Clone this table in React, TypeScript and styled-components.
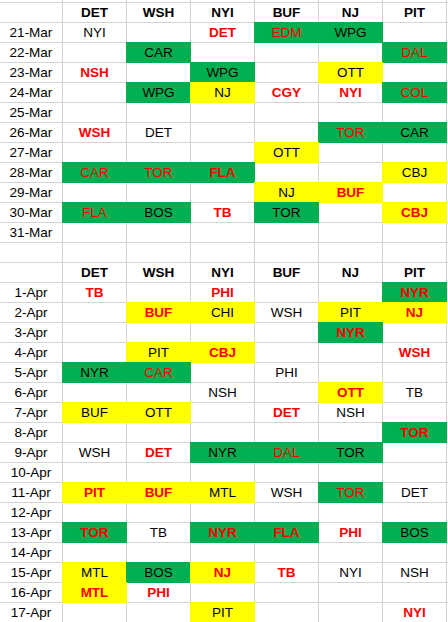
import React from "react";
import styled, { createGlobalStyle } from "styled-components";

const Global = createGlobalStyle`
  html, body { margin: 0; padding: 0; background: #ffffff; }
  body { font-family: "Liberation Sans", Arial, sans-serif; }
`;

const GRID = "#d4d4d4";
const FILLS: Record<string, string> = { g: "#00b050", y: "#ffff00" };

const Sheet = styled.div`
  display: grid;
  grid-template-columns: 62px repeat(6, 63px) 1px;
  grid-auto-rows: 19px;
  grid-template-rows: 2px;
  gap: 1px;
  width: 448px;
  height: 622px;
  overflow: hidden;
  background: ${GRID};
`;

const Cell = styled.div<{ $fill?: string; $red?: boolean; $bold?: boolean }>`
  background: ${(p) => (p.$fill ? FILLS[p.$fill] : "#ffffff")};
  box-shadow: ${(p) => (p.$fill ? `0 0 0 1px ${FILLS[p.$fill]}` : "none")};
  color: ${(p) => (p.$red ? "#ff0000" : "#000000")};
  font-weight: ${(p) => (p.$bold ? 700 : 400)};
  font-size: 13.5px;
  line-height: 18px;
  padding-top: 1px;
  text-align: center;
  white-space: nowrap;
  overflow: visible;
`;

const Spacer = styled.div`
  background: #ffffff;
`;

type Spec = string; // "TXT|color|fill|bold" e.g. "EDM|r|g|0"

const TEAMS = ["DET", "WSH", "NYI", "BUF", "NJ", "PIT"];

const march: [string, Spec[]][] = [
  ["21-Mar", ["NYI", "", "DET|r||1", "EDM|r|g|0", "WPG|k|g", ""]],
  ["22-Mar", ["", "CAR|k|g", "", "", "", "DAL|r|g|0"]],
  ["23-Mar", ["NSH|r||1", "", "WPG|k|g", "", "OTT|k|y", ""]],
  ["24-Mar", ["", "WPG|k|g", "NJ|k|y", "CGY|r||1", "NYI|r||1", "COL|r|g|0"]],
  ["25-Mar", ["", "", "", "", "", ""]],
  ["26-Mar", ["WSH|r||1", "DET", "", "", "TOR|r|g|0", "CAR|k|g"]],
  ["27-Mar", ["", "", "", "OTT|k|y", "", ""]],
  ["28-Mar", ["CAR|r|g|0", "TOR|r|g|0", "FLA|r|g|1", "", "", "CBJ|k|y"]],
  ["29-Mar", ["", "", "", "NJ|k|y", "BUF|r|y|1", ""]],
  ["30-Mar", ["FLA|r|g|0", "BOS|k|g", "TB|r||1", "TOR|k|g", "", "CBJ|r|y|1"]],
  ["31-Mar", ["", "", "", "", "", ""]],
];

const april: [string, Spec[]][] = [
  ["1-Apr", ["TB|r||1", "", "PHI|r||1", "", "", "NYR|r|g|1"]],
  ["2-Apr", ["", "BUF|r|y|1", "CHI|k|y", "WSH", "PIT|k|y", "NJ|r|y|1"]],
  ["3-Apr", ["", "", "", "", "NYR|r|g|1", ""]],
  ["4-Apr", ["", "PIT|k|y", "CBJ|r|y|1", "", "", "WSH|r||1"]],
  ["5-Apr", ["NYR|k|g", "CAR|r|g|0", "", "PHI", "", ""]],
  ["6-Apr", ["", "", "NSH", "", "OTT|r|y|1", "TB"]],
  ["7-Apr", ["BUF|k|y", "OTT|k|y", "", "DET|r||1", "NSH", ""]],
  ["8-Apr", ["", "", "", "", "", "TOR|r|g|1"]],
  ["9-Apr", ["WSH", "DET|r||1", "NYR|k|g", "DAL|r|g|0", "TOR|k|g", ""]],
  ["10-Apr", ["", "", "", "", "", ""]],
  ["11-Apr", ["PIT|r|y|1", "BUF|r|y|1", "MTL|k|y", "WSH", "TOR|r|g|0", "DET"]],
  ["12-Apr", ["", "", "", "", "", ""]],
  ["13-Apr", ["TOR|r|g|1", "TB", "NYR|r|g|1", "FLA|r|g|1", "PHI|r||1", "BOS|k|g"]],
  ["14-Apr", ["", "", "", "", "", ""]],
  ["15-Apr", ["MTL|k|y", "BOS|k|g", "NJ|r|y|1", "TB|r||1", "NYI", "NSH"]],
  ["16-Apr", ["MTL|r|y|1", "PHI|r||1", "", "", "", ""]],
  ["17-Apr", ["", "", "PIT|k|y", "", "", "NYI|r||1"]],
];

const SpecCell: React.FC<{ spec: Spec }> = ({ spec }) => {
  const [text = "", color = "k", fill = "", bold = "0"] = spec.split("|");
  return (
    <Cell $fill={fill || undefined} $red={color === "r"} $bold={bold === "1"}>
      {text}
    </Cell>
  );
};

const HeaderRow: React.FC<{ k: string }> = ({ k }) => (
  <React.Fragment key={k}>
    <Cell />
    {TEAMS.map((t) => (
      <Cell key={t} $bold>
        {t}
      </Cell>
    ))}
    <Spacer />
  </React.Fragment>
);

const DataRows: React.FC<{ rows: [string, Spec[]][] }> = ({ rows }) => (
  <>
    {rows.map(([date, cells]) => (
      <React.Fragment key={date}>
        <Cell>{date}</Cell>
        {cells.map((s, i) => (
          <SpecCell key={i} spec={s} />
        ))}
        <Spacer />
      </React.Fragment>
    ))}
  </>
);

const BlankRow: React.FC = () => (
  <>
    {Array.from({ length: 7 }).map((_, i) => (
      <Cell key={i} />
    ))}
    <Spacer />
  </>
);

export default function App() {
  return (
    <>
      <Global />
      <Sheet>
        {Array.from({ length: 8 }).map((_, i) => (
          <Spacer key={"top" + i} />
        ))}
        <HeaderRow k="h1" />
        <DataRows rows={march} />
        <BlankRow />
        <HeaderRow k="h2" />
        <DataRows rows={april} />
      </Sheet>
    </>
  );
}
